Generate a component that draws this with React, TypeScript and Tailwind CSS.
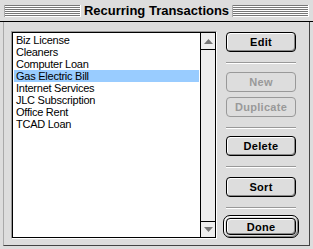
import React from 'react';

const items = [
  'Biz License',
  'Cleaners',
  'Computer Loan',
  'Gas Electric Bill',
  'Internet Services',
  'JLC Subscription',
  'Office Rent',
  'TCAD Loan',
];
const selected = 3;

const Stripes: React.FC = () => (
  <div className="h-[12px] flex-1 border-l border-l-[#aaa] border-r border-r-white bg-[repeating-linear-gradient(to_bottom,#777_0px,#777_1px,#fff_1px,#fff_2px)]" />
);

const Separator: React.FC = () => (
  <div className="w-[70px] h-[2px] border-t border-t-[#999] border-b border-b-white" />
);

const MacButton: React.FC<{ label: string; disabled?: boolean; className?: string }> = ({
  label,
  disabled,
  className = '',
}) => {
  if (disabled) {
    return (
      <button
        disabled
        className={`w-[70px] h-[20px] rounded-[4px] border border-[#999] bg-[#dddddd] text-[11px] font-bold tracking-[0.3px] text-[#999] ${className}`}
      >
        {label}
      </button>
    );
  }
  return (
    <button
      className={`w-[70px] h-[20px] rounded-[4px] border border-black bg-[#dddddd] shadow-[inset_1px_1px_0_#fff,inset_-1px_-1px_0_#888] text-[11px] font-bold tracking-[0.3px] text-black ${className}`}
    >
      {label}
    </button>
  );
};

const Arrow: React.FC<{ up?: boolean }> = ({ up }) => (
  <svg width="9" height="5" viewBox="0 0 9 5">
    {up ? <polygon points="4.5,0 9,5 0,5" fill="#777" /> : <polygon points="0,0 9,0 4.5,5" fill="#777" />}
  </svg>
);

export default function App() {
  return (
    <div className="w-[313px] h-[249px] flex flex-col bg-[#dddddd] font-['Liberation_Sans',Arial,sans-serif] select-none">
      {/* Title bar */}
      <div className="h-[22px] shrink-0 flex items-center px-[4px] border-b border-black">
        <Stripes />
        <div className="px-[3px] text-[13px] font-bold leading-none text-black">Recurring Transactions</div>
        <Stripes />
      </div>

      {/* Body */}
      <div className="flex-1 flex px-[3px] pb-[3px]">
        <div className="flex-1 flex items-start pl-[7px] pt-[9px] border-l border-l-[#aaa] border-r border-r-[#444] border-b border-b-[#444]">
          {/* List box */}
          <div className="w-[206px] h-[208px] flex border border-t-[#999] border-l-[#999] border-r-white border-b-white">
            <div className="flex-1 flex border border-black">
              <div className="flex-1 bg-white pt-[1px] text-[11px] tracking-[-0.25px] text-black">
                {items.map((it, i) => (
                  <div
                    key={it}
                    className={
                      i === selected
                        ? 'mx-[1px] h-[12px] leading-[12px] pl-[2px] bg-[#99ccff]'
                        : 'mx-[1px] h-[12px] leading-[12px] pl-[2px]'
                    }
                  >
                    {it}
                  </div>
                ))}
              </div>
              <div className="w-[15px] flex flex-col border-l border-black bg-[#eeeeee]">
                <div className="h-[17px] flex items-center justify-center border-b border-black">
                  <Arrow up />
                </div>
                <div className="flex-1" />
                <div className="h-[16px] flex items-center justify-center border-t border-black">
                  <Arrow />
                </div>
              </div>
            </div>
          </div>

          {/* Buttons */}
          <div className="w-[76px] ml-[6px] mt-[1px] flex flex-col items-center">
            <MacButton label="Edit" />
            <div className="mt-[10px]" />
            <Separator />
            <MacButton label="New" disabled className="mt-[8px]" />
            <MacButton label="Duplicate" disabled className="mt-[5px]" />
            <div className="mt-[10px]" />
            <Separator />
            <MacButton label="Delete" className="mt-[7px]" />
            <div className="mt-[10px]" />
            <Separator />
            <MacButton label="Sort" className="mt-[9px]" />
            <div className="mt-[10px]" />
            <Separator />
            <div className="mt-[6px] w-[76px] h-[23px] flex items-center justify-center rounded-[7px] border border-black bg-[#dddddd] shadow-[inset_1px_1px_0_#fff,inset_-1px_-1px_0_#888]">
              <button className="w-[70px] h-[17px] rounded-[4px] border border-black bg-[#dddddd] shadow-[inset_1px_1px_0_#fff,inset_-1px_-1px_0_#888] text-[11px] font-bold tracking-[0.3px] text-black">
                Done
              </button>
            </div>
          </div>
        </div>
      </div>
    </div>
  );
}
